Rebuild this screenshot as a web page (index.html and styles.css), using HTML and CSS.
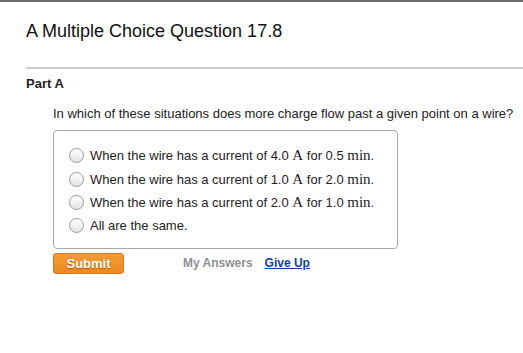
FILE: index.html
```html
<!DOCTYPE html>
<html lang="en">
<head>
    <meta charset="UTF-8">
    <meta name="viewport" content="width=device-width, initial-scale=1.0">
    <title>A Multiple Choice Question 17.8</title>
    <link rel="stylesheet" href="styles.css">
</head>
<body>
    <div class="problem">
        <h1 class="title">A Multiple Choice Question 17.8</h1>

        <div class="part">
            <h2 class="partname">Part A</h2>
            <div class="partbody">
                <p class="question">In which of these situations does more charge flow past a given point on a wire?</p>

                <form class="choices" onsubmit="event.preventDefault();">
                    <label class="choice">
                        <input type="radio" name="ans" value="a">
                        <span>When the wire has a current of 4.0 <span class="m">A</span> for 0.5 <span class="m">min</span>.</span>
                    </label>
                    <label class="choice">
                        <input type="radio" name="ans" value="b">
                        <span>When the wire has a current of 1.0 <span class="m">A</span> for 2.0 <span class="m">min</span>.</span>
                    </label>
                    <label class="choice">
                        <input type="radio" name="ans" value="c">
                        <span>When the wire has a current of 2.0 <span class="m">A</span> for 1.0 <span class="m">min</span>.</span>
                    </label>
                    <label class="choice">
                        <input type="radio" name="ans" value="d">
                        <span>All are the same.</span>
                    </label>
                </form>

                <div class="actions">
                    <button class="submit">Submit</button>
                    <a href="#" class="myanswers">My Answers</a>
                    <a href="#" class="giveup">Give Up</a>
                </div>
            </div>
        </div>
    </div>
</body>
</html>
```

FILE: styles.css
```css
body{
  margin:0;
  background:#fff;
  font-family:"Liberation Sans", Arial, sans-serif;
  color:#222;
  border-top:2px solid #6a6a6a;
}
.problem{
  padding-left:26px;
}
.title{
  margin:0;
  padding-top:18px;
  font-size:18px;
  font-weight:normal;
  line-height:22px;
  color:#111;
  height:47px;
}
.part{
  border-top:2px solid #cdcdcd;
}
.partname{
  margin:0;
  padding-top:7px;
  font-size:13px;
  line-height:16px;
  font-weight:bold;
  color:#222;
}
.partbody{
  padding-left:27px;
}
.question{
  margin:0;
  padding-top:14px;
  font-size:13px;
  line-height:16px;
  color:#222;
}
.choices{
  margin-top:8px;
  width:328px;
  border:1px solid #a9a9a9;
  border-radius:4px;
  padding:13px 0 10px 15px;
}
.choice{
  display:flex;
  align-items:center;
  height:23.4px;
  font-size:13px;
  color:#222;
}
.choice input{
  appearance:none;
  -webkit-appearance:none;
  width:15px;
  height:15px;
  margin:0 6px 0 0;
  border:1px solid #9a9a9a;
  border-radius:50%;
  background:linear-gradient(#ffffff, #e4e4e4);
  box-sizing:border-box;
}
.m{
  font-family:"Liberation Serif", "Times New Roman", serif;
  font-size:15px;
}
.actions{
  display:flex;
  align-items:center;
  margin-top:4px;
  font-size:12px;
  font-weight:bold;
}
.submit{
  width:71px;
  height:21px;
  padding:0;
  border:1px solid #d9781a;
  border-radius:3px;
  background:linear-gradient(#f39a34, #ec8a1f);
  color:#fff;
  font-family:"Liberation Sans", Arial, sans-serif;
  font-size:13px;
  font-weight:bold;
  text-shadow:0 1px 1px rgba(120,60,0,.6);
}
.myanswers{
  margin-left:59px;
  color:#8f8f8f;
  text-decoration:none;
}
.giveup{
  margin-left:12px;
  color:#0b3fae;
  text-decoration:underline;
}
```
